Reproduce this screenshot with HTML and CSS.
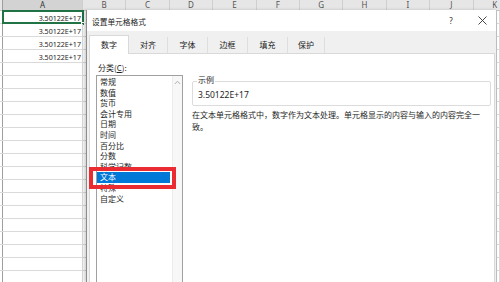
FILE: index.html
```html
<!DOCTYPE html>
<html lang="zh-CN">
<head>
<meta charset="utf-8">
<title>设置单元格格式</title>
<link rel="stylesheet" href="styles.css">
</head>
<body>
<div class="sheet">
  <div class="hdr">
    <div class="stub"></div>
    <div class="hc col-a hc-sel">A</div>
    <div class="hc">B</div>
    <div class="hc">C</div>
    <div class="hc">D</div>
    <div class="hc">E</div>
    <div class="hc">F</div>
    <div class="hc">G</div>
    <div class="hc">H</div>
    <div class="hc">I</div>
    <div class="hc">J</div>
    <div class="hc">K</div>
  </div>
  <div class="grid">
    <div class="row"><div class="stub"></div><div class="c col-a sel">3.50122E+17<span class="handle"></span></div><div class="c rest"></div></div>
    <div class="row"><div class="stub"></div><div class="c col-a">3.50122E+17</div><div class="c rest"></div></div>
    <div class="row"><div class="stub"></div><div class="c col-a">3.50122E+17</div><div class="c rest"></div></div>
    <div class="row"><div class="stub"></div><div class="c col-a">3.50122E+17</div><div class="c rest"></div></div>
    <div class="row"><div class="stub"></div><div class="c col-a"></div><div class="c rest"></div></div>
    <div class="row"><div class="stub"></div><div class="c col-a"></div><div class="c rest"></div></div>
    <div class="row"><div class="stub"></div><div class="c col-a"></div><div class="c rest"></div></div>
    <div class="row"><div class="stub"></div><div class="c col-a"></div><div class="c rest"></div></div>
    <div class="row"><div class="stub"></div><div class="c col-a"></div><div class="c rest"></div></div>
    <div class="row"><div class="stub"></div><div class="c col-a"></div><div class="c rest"></div></div>
    <div class="row"><div class="stub"></div><div class="c col-a"></div><div class="c rest"></div></div>
    <div class="row"><div class="stub"></div><div class="c col-a"></div><div class="c rest"></div></div>
    <div class="row"><div class="stub"></div><div class="c col-a"></div><div class="c rest"></div></div>
    <div class="row"><div class="stub"></div><div class="c col-a"></div><div class="c rest"></div></div>
    <div class="row"><div class="stub"></div><div class="c col-a"></div><div class="c rest"></div></div>
    <div class="row"><div class="stub"></div><div class="c col-a"></div><div class="c rest"></div></div>
    <div class="row"><div class="stub"></div><div class="c col-a"></div><div class="c rest"></div></div>
    <div class="row"><div class="stub"></div><div class="c col-a"></div><div class="c rest"></div></div>
    <div class="row"><div class="stub"></div><div class="c col-a"></div><div class="c rest"></div></div>
    <div class="row"><div class="stub"></div><div class="c col-a"></div><div class="c rest"></div></div>
    <div class="row"><div class="stub"></div><div class="c col-a"></div><div class="c rest"></div></div>
  </div>
</div>

<div class="dialog">
  <div class="titlebar">
    <span class="title">设置单元格格式</span>
    <span class="help">?</span>
    <span class="close"><svg width="9" height="9" viewBox="0 0 9 9"><path d="M0.5 0.5L8.5 8.5M8.5 0.5L0.5 8.5" stroke="#333" stroke-width="0.9" fill="none"/></svg></span>
  </div>
  <div class="tabs">
    <div class="tab tab-active">数字</div>
    <div class="tab w39">对齐</div>
    <div class="tab">字体</div>
    <div class="tab">边框</div>
    <div class="tab">填充</div>
    <div class="tab w37">保护</div>
  </div>
  <div class="panel">
    <div class="left">
      <div class="label">分类(<u>C</u>):</div>
      <div class="listbox">
        <div class="items">
          <div class="item">常规</div>
          <div class="item">数值</div>
          <div class="item">货币</div>
          <div class="item">会计专用</div>
          <div class="item">日期</div>
          <div class="item">时间</div>
          <div class="item">百分比</div>
          <div class="item">分数</div>
          <div class="item">科学记数</div>
          <div class="item item-sel">文本</div>
          <div class="item">特殊</div>
          <div class="item">自定义</div>
        </div>
        <div class="vscroll">
          <svg width="7" height="5" viewBox="0 0 7 5"><path d="M0.8 4L3.5 1.3L6.2 4" stroke="#a6a6a6" stroke-width="0.9" fill="none"/></svg>
        </div>
      </div>
    </div>
    <div class="right">
      <div class="sample">
        <span class="legend">示例</span>
        <div class="value">3.50122E+17</div>
      </div>
      <p class="desc">在文本单元格格式中，数字作为文本处理。单元格显示的内容与输入的内容完全一致。</p>
    </div>
  </div>
  <div class="redbox"></div>
</div>
</body>
</html>
```

FILE: styles.css
```css
* { box-sizing: border-box; }
html, body {
  margin: 0;
  padding: 0;
}
body {
  width: 500px;
  height: 282px;
  overflow: hidden;
  position: relative;
  background: #fff;
  font-family: "Noto Sans", "Noto Sans CJK SC", sans-serif;
  color: #1e1e1e;
}

/* ---------- spreadsheet ---------- */
.sheet {
  width: 500px;
  height: 282px;
  overflow: hidden;
}
.hdr {
  display: flex;
  height: 11px;
  background: #e6e6e6;
  border-bottom: 1px solid #c6c6c6;
}
.stub {
  width: 3px;
  flex: none;
  border-right: 1px solid #9e9e9e;
}
.hc {
  width: 43.4px;
  flex: none;
  border-right: 1px solid #cfcfcf;
  font-size: 8px;
  line-height: 10px;
  text-align: center;
  color: #555;
}
.col-a {
  width: 80px;
  flex: none;
}
.hc-sel {
  background: #d3d3d3;
  color: #333;
}
.grid {
  display: flex;
  flex-direction: column;
}
.row {
  display: flex;
  height: 13px;
  flex: none;
  border-bottom: 1px solid #dadada;
}
.c {
  position: relative;
  border-right: 1px solid #dadada;
  font-size: 7.1px;
  line-height: 12px;
  padding-top: 1px;
  text-align: right;
  padding-right: 1px;
  color: #222;
}
.rest {
  flex: 1;
}
.sel {
  outline: 2px solid #217346;
  outline-offset: -1px;
}
.handle {
  position: absolute;
  right: -3px;
  bottom: -3px;
  width: 4px;
  height: 4px;
  background: #217346;
  border: 1px solid #fff;
}

/* ---------- dialog ---------- */
.dialog {
  position: absolute;
  left: 86px;
  top: 10px;
  width: 411px;
  height: 272px;
  overflow: hidden;
  background: #f0f0f0;
  border-left: 1px solid #8c8c8c;
  border-right: 1px solid #bdbdbd;
  box-shadow: -2px 0 3px rgba(0, 0, 0, 0.18);
  font-family: "Noto Sans CJK SC", sans-serif;
  font-size: 8px;
}
.titlebar {
  display: flex;
  align-items: center;
  height: 21px;
  background: #fff;
  padding-left: 5px;
}
.title {
  font-size: 7.7px;
  flex: 1;
  padding-top: 1px;
  color: #1a1a1a;
}
.help {
  font-family: "Noto Sans", sans-serif;
  font-size: 8px;
  color: #333;
  width: 10px;
  text-align: center;
  margin-right: 22px;
}
.close {
  display: flex;
  width: 9px;
  margin-right: 9px;
}
.tabs {
  display: flex;
  align-items: flex-end;
  height: 22px;
  padding-left: 2px;
  position: relative;
  z-index: 1;
}
.tab {
  width: 40px;
  height: 16px;
  line-height: 15px;
  text-align: center;
  border-right: 1px solid #dedede;
  color: #222;
}
.w39 { width: 39px; }
.w37 { width: 37px; }
.tab-active {
  height: 19px;
  line-height: 18px;
  margin-bottom: -1px;
  background: #fff;
  border: 1px solid #d9d9d9;
  border-bottom: none;
}
.panel {
  display: flex;
  margin-left: 2px;
  width: 406px;
  height: 229px;
  background: #fff;
  border: 1px solid #d9d9d9;
  border-bottom: none;
  padding: 8px 3px 0 6px;
  gap: 9px;
}
.left {
  width: 87px;
  flex: none;
  display: flex;
  flex-direction: column;
}
.label {
  line-height: 12px;
  padding-left: 2px;
  margin-bottom: 1px;
}
.label u {
  text-underline-offset: 1px;
}
.listbox {
  display: flex;
  flex: 1;
  border: 1px solid #a0a0a0;
  border-bottom: none;
}
.items {
  flex: 1;
  padding: 1px 2px 0 0;
}
.item {
  height: 10.6px;
  line-height: 10.6px;
  padding-left: 3px;
  white-space: nowrap;
}
.item-sel {
  background: #0078d7;
  color: #fff;
}
.vscroll {
  width: 10px;
  flex: none;
  background: #f7f7f7;
  border-left: 1px solid #ececec;
  display: flex;
  justify-content: center;
  align-items: flex-start;
  padding-top: 4px;
}
.right {
  flex: 1;
  padding-top: 19px;
}
.sample {
  border: 1px solid #dcdcdc;
  border-radius: 2px;
  padding: 0 4px 0 4px;
}
.legend {
  display: block;
  width: max-content;
  margin-top: -7px;
  padding: 0 1px;
  background: #fff;
  line-height: 10px;
}
.value {
  font-family: "Noto Sans", sans-serif;
  font-size: 8.5px;
  line-height: 20px;
  padding-left: 1px;
}
.desc {
  margin: 3px 0 0 0;
  width: 293px;
  line-height: 12px;
}
.redbox {
  position: absolute;
  left: 2px;
  top: 157px;
  width: 87px;
  height: 22px;
  border: 4px solid #ea2b31;
}
```
